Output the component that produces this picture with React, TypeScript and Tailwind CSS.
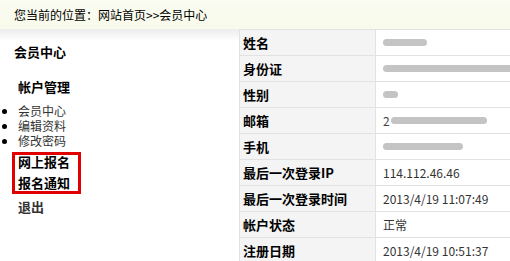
import React from 'react'

const font = { fontFamily: '"Noto Sans CJK SC", "Liberation Sans", sans-serif' }

function Blob({ w, text }: { w: number; text?: string }) {
  return (
    <div className="relative flex items-center h-full">
      {text && <span className="text-[12px] text-[#444] mr-[1px]">{text}</span>}
      <div className="h-[7px] rounded-full bg-[#c4c4c4] blur-[0.6px]" style={{ width: w }} />
    </div>
  )
}

const rows: { label: string; value: React.ReactNode }[] = [
  { label: '姓名', value: <Blob w={44} /> },
  { label: '身份证', value: <Blob w={132} /> },
  { label: '性别', value: <Blob w={15} /> },
  { label: '邮箱', value: <Blob w={96} text="2" /> },
  { label: '手机', value: <Blob w={80} /> },
  { label: '最后一次登录IP', value: '114.112.46.46' },
  { label: '最后一次登录时间', value: '2013/4/19 11:07:49' },
  { label: '帐户状态', value: '正常' },
  { label: '注册日期', value: '2013/4/19 10:51:37' },
]

export default function App() {
  return (
    <div className="w-[510px] h-[261px] overflow-hidden bg-white text-black" style={font}>
      {/* breadcrumb */}
      <div className="h-[29px] bg-gradient-to-b from-[#fbfcf2] to-[#f8faea] flex items-center pl-[14px] text-[12px] leading-none">
        您当前的位置：网站首页&gt;&gt;会员中心
      </div>

      <div className="flex">
        {/* sidebar */}
        <div className="w-[239px] shrink-0">
          <div className="h-[12px] bg-gradient-to-b from-[#ececec] to-white" />
          <div className="pl-[14px] pt-[4px] text-[13px] font-bold leading-none">会员中心</div>
          <div className="pl-[18px] pt-[22px] text-[13px] font-bold leading-none">帐户管理</div>
          <ul className="pt-[10px] pl-[18px] list-disc list-outside text-[12px] text-[#333] leading-[15px] marker:text-black">
            <li>会员中心</li>
            <li>编辑资料</li>
            <li>修改密码</li>
          </ul>
          <div className="ml-[12px] mt-[4px] w-[69px] border-[3px] border-[#e00000] pl-[3px] pb-[1px] flex flex-col gap-[7px]">
            <div className="text-[13px] font-bold leading-[14px]">网上报名</div>
            <div className="text-[13px] font-bold leading-[14px]">报名通知</div>
          </div>
          <div className="pl-[18px] pt-[6px] text-[13px] font-bold text-[#333] leading-none">退出</div>
        </div>

        {/* table */}
        <div className="flex-1 border-l border-t border-[#e2e2e2]">
          {rows.map((r) => (
            <div key={r.label} className="flex h-[26px] border-b border-[#e2e2e2]">
              <div className="w-[136px] shrink-0 bg-[#f4f4f4] border-r border-[#e2e2e2] pl-[3px] flex items-center text-[13px] font-bold">
                {r.label}
              </div>
              <div className="flex-1 pl-[7px] flex items-center text-[12px] text-[#333] whitespace-nowrap">{r.value}</div>
            </div>
          ))}
        </div>
      </div>
    </div>
  )
}
